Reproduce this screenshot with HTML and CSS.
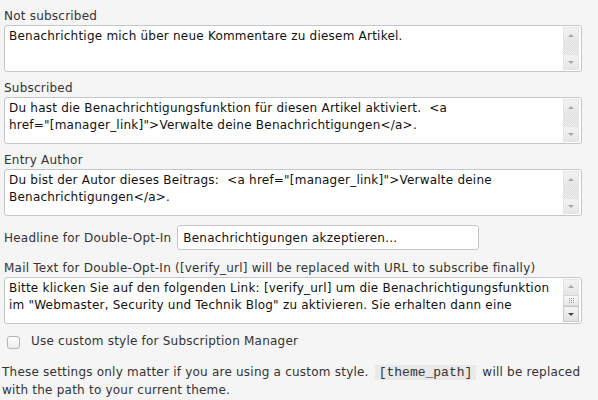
FILE: index.html
```html
<!DOCTYPE html>
<html>
<head>
<meta charset="utf-8">
<link rel="stylesheet" href="styles.css">
</head>
<body>
<div class="page">
  <div class="field">
    <label class="label">Not subscribed</label>
    <div class="tbox">
      <textarea class="ta">Benachrichtige mich über neue Kommentare zu diesem Artikel.</textarea>
      <div class="sb"><span class="btn up"></span><span class="track"></span><span class="btn down"></span></div>
    </div>
  </div>
  <div class="field">
    <label class="label">Subscribed</label>
    <div class="tbox">
      <textarea class="ta">Du hast die Benachrichtigungsfunktion für diesen Artikel aktiviert.  &lt;a href="&#8288;[manager_link]"&gt;Verwalte deine Benachrichtigungen&lt;/a&gt;.</textarea>
      <div class="sb"><span class="btn up"></span><span class="track"></span><span class="btn down"></span></div>
    </div>
  </div>
  <div class="field">
    <label class="label">Entry Author</label>
    <div class="tbox">
      <textarea class="ta">Du bist der Autor dieses Beitrags:  &lt;a href="&#8288;[manager_link]"&gt;Verwalte deine Benachrichtigungen&lt;/a&gt;.</textarea>
      <div class="sb"><span class="btn up"></span><span class="track"></span><span class="btn down"></span></div>
    </div>
  </div>
  <div class="row">
    <label class="label inline">Headline for Double-Opt-In</label>
    <input class="inp" type="text" value="Benachrichtigungen akzeptieren...">
  </div>
  <div class="field mail">
    <label class="label">Mail Text for Double-Opt-In ([verify_url] will be replaced with URL to subscribe finally)</label>
    <div class="tbox">
      <textarea class="ta">Bitte klicken Sie auf den folgenden Link: [verify_url] um die Benachrichtigungsfunktion im "Webmaster, Security und Technik Blog" zu aktivieren. Sie erhalten dann eine</textarea>
      <div class="sb"><span class="btn up"></span><span class="thumb"><i></i><i></i><i></i></span><span class="track"></span><span class="btn down dark"></span></div>
    </div>
  </div>
  <div class="check">
    <span class="cb"></span>
    <span class="label">Use custom style for Subscription Manager</span>
  </div>
  <p class="note">These settings only matter if you are using a custom style. <code>[theme_path]</code> will be replaced with the path to your current theme.</p>
</div>
</body>
</html>
```

FILE: styles.css
```css
html, body {
  margin: 0;
  padding: 0;
  background: #f5f5f5;
}
body {
  font-family: "DejaVu Sans", Verdana, sans-serif;
  font-size: 12px;
  line-height: 18px;
  letter-spacing: 0.22px;
  color: #333;
}
.page {
  padding: 7px 16px 0 4px;
  display: flex;
  flex-direction: column;
}
.field {
  display: flex;
  flex-direction: column;
  margin-bottom: 7px;
}
.label {
  display: block;
  height: 18px;
  color: #333;
}
.label.inline {
  display: inline;
}
.tbox {
  display: flex;
  height: 45px;
  border: 1px solid #c3c6cb;
  border-radius: 3px;
  background: #fff;
  padding: 0 2px 0 0;
}
.ta {
  flex: 1;
  border: 0;
  outline: 0;
  resize: none;
  overflow: hidden;
  margin: 0;
  padding: 2px 8px 0 4px;
  font-family: "DejaVu Sans", Verdana, sans-serif;
  font-size: 12px;
  line-height: 17px;
  letter-spacing: 0.22px;
  color: #111;
  background: transparent;
}
.sb {
  width: 16px;
  margin: 1px 0;
  display: flex;
  flex-direction: column;
  background-color: #f0f0f0;
  background-image:
    linear-gradient(45deg, #dcdcdc 25%, transparent 25%, transparent 75%, #dcdcdc 75%),
    linear-gradient(45deg, #dcdcdc 25%, transparent 25%, transparent 75%, #dcdcdc 75%);
  background-size: 2px 2px;
  background-position: 0 0, 1px 1px;
}
.btn {
  height: 16px;
  box-sizing: border-box;
  border: 1px solid #e4e4e4;
  background: linear-gradient(#f2f2f2, #e6e6e6);
  display: flex;
  align-items: center;
  justify-content: center;
}
.btn::after {
  content: "";
  width: 0;
  height: 0;
  border-left: 3px solid transparent;
  border-right: 3px solid transparent;
}
.up::after { border-bottom: 3px solid #a8a8a8; }
.down::after { border-top: 3px solid #a8a8a8; }
.down.dark { border-color: #c8c8c8; background: linear-gradient(#f4f4f4, #e2e2e2); }
.down.dark::after { border-top-color: #444; }
.track {
  flex: 1;
}
.thumb {
  height: 12px;
  box-sizing: border-box;
  border: 1px solid #d6d6d6;
  background: linear-gradient(#f6f6f6, #e8e8e8);
  display: flex;
  justify-content: center;
  align-items: center;
  gap: 1px;
}
.thumb i {
  width: 1px;
  height: 5px;
  background: repeating-linear-gradient(#9a9a9a 0 1px, transparent 1px 2px);
}
.row {
  display: flex;
  align-items: center;
  gap: 6px;
  margin-top: 2px;
  margin-bottom: 9px;
}
.inp {
  width: 302px;
  height: 25px;
  box-sizing: border-box;
  border: 1px solid #c3c6cb;
  border-radius: 3px;
  background: #fff;
  padding: 0 5px;
  margin: 0;
  font-family: "DejaVu Sans", Verdana, sans-serif;
  font-size: 12px;
  letter-spacing: 0.22px;
  color: #111;
  outline: 0;
}
.check {
  display: flex;
  align-items: center;
  gap: 11px;
  padding-left: 3px;
  height: 20px;
}
.cb {
  width: 13px;
  height: 13px;
  box-sizing: border-box;
  border: 1px solid #b4b4b4;
  border-radius: 3px;
  background: linear-gradient(#fff, #ececec);
  margin-top: 3px;
}
.note {
  margin: 12px -8px 0 -2px;
  color: #333;
}
code {
  font-family: "Liberation Mono", "Courier New", monospace;
  font-size: 13px;
  line-height: 15px;
  letter-spacing: 0;
  color: #333;
  background: #e9e9e9;
  padding: 0 4px;
  margin: 0 2px;
}
```
